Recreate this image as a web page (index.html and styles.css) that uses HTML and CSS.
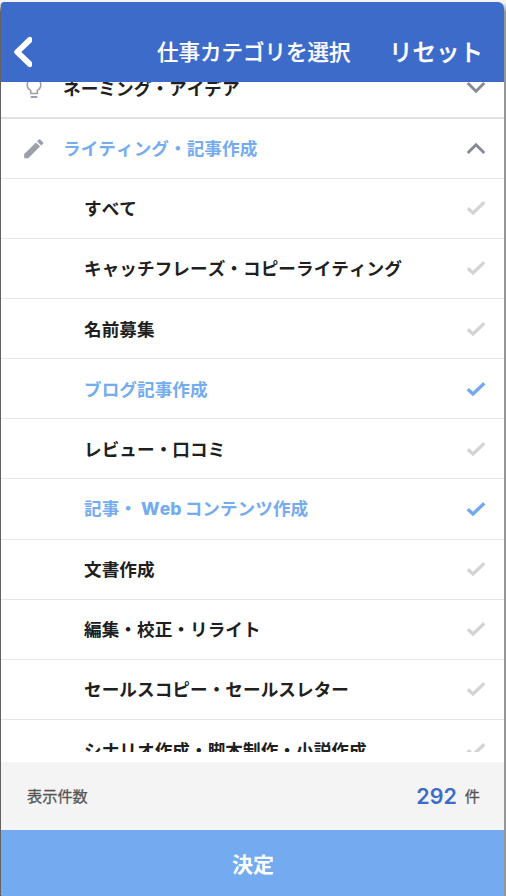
FILE: index.html
```html
<!DOCTYPE html>
<html lang="ja">
<head>
<meta charset="utf-8">
<title>仕事カテゴリを選択</title>
<link rel="stylesheet" href="styles.css">
</head>
<body>
<svg class="defs" width="0" height="0" aria-hidden="true">
  <symbol id="check" viewBox="0 0 20 16"><path d="M1.8 8.2 7 12.9 18.3 2.3" fill="none" stroke="currentColor" stroke-width="3.3"/></symbol>
  <symbol id="chevron" viewBox="0 0 20 14"><path d="M1.7 2 10 10.3 18.3 2" fill="none" stroke="currentColor" stroke-width="2.9"/></symbol>
</svg>
<div class="screen">
  <header class="header">
    <svg class="back" viewBox="0 0 20 32"><path d="M17.8 3.8 5.2 16 17.8 28.2" fill="none" stroke="currentColor" stroke-width="5.8" stroke-linecap="round" stroke-linejoin="round"/></svg>
    <h1 class="title">仕事カテゴリを選択</h1>
    <span class="reset">リセット</span>
  </header>
  <main class="viewport">
    <ul class="list">
      <li class="row category closed">
        <svg class="lead" viewBox="0 0 22 24"><path d="M7.7 17.5v-3.1C5.3 13 4.2 11.1 4.2 8.7a6.8 6.8 0 0 1 13.6 0c0 2.4-1.1 4.3-3.5 5.7v3.1z" fill="none" stroke="currentColor" stroke-width="1.6"/><path d="M7.7 21h6.6" fill="none" stroke="currentColor" stroke-width="1.9"/></svg>
        <span class="label">ネーミング・アイデア</span>
        <svg class="chevron"><use href="#chevron"/></svg>
      </li>
      <li class="row category active">
        <svg class="lead" viewBox="0 0 22 24"><path d="M1.2 18.1 13 6.4l4.1 4.1L5.2 22.2h-4z" fill="currentColor"/><path d="m14 5.3 1.8-1.8q.7-.7 1.4 0l2.8 2.8q.7.7 0 1.4l-1.8 1.8z" fill="currentColor"/></svg>
        <span class="label">ライティング・記事作成</span>
        <svg class="chevron up"><use href="#chevron"/></svg>
      </li>
      <li class="row"><span class="label">すべて</span><svg class="check"><use href="#check"/></svg></li>
      <li class="row"><span class="label">キャッチフレーズ・コピーライティング</span><svg class="check"><use href="#check"/></svg></li>
      <li class="row"><span class="label">名前募集</span><svg class="check"><use href="#check"/></svg></li>
      <li class="row active"><span class="label">ブログ記事作成</span><svg class="check"><use href="#check"/></svg></li>
      <li class="row"><span class="label">レビュー・口コミ</span><svg class="check"><use href="#check"/></svg></li>
      <li class="row active"><span class="label">記事・<span class="latin">Web</span>コンテンツ作成</span><svg class="check"><use href="#check"/></svg></li>
      <li class="row"><span class="label">文書作成</span><svg class="check"><use href="#check"/></svg></li>
      <li class="row"><span class="label">編集・校正・リライト</span><svg class="check"><use href="#check"/></svg></li>
      <li class="row"><span class="label">セールスコピー・セールスレター</span><svg class="check"><use href="#check"/></svg></li>
      <li class="row"><span class="label">シナリオ作成・脚本制作・小説作成</span><svg class="check"><use href="#check"/></svg></li>
    </ul>
  </main>
  <section class="summary">
    <span class="caption">表示件数</span>
    <span class="count">292</span>
    <span class="unit">件</span>
  </section>
  <button class="submit">決定</button>
</div>
</body>
</html>
```
FILE: styles.css
```css
* { box-sizing: border-box; }

body {
  margin: 0;
  height: 896px;
  overflow: hidden;
  padding: 2px 2px 0 1px;
  background: linear-gradient(to bottom, #f3f3f3 0 3px, transparent 12px),
    linear-gradient(to right, #626264 0 50%, #969696 50%);
  font-family: "Noto Sans CJK JP", sans-serif;
  font-kerning: none;
  color: #202020;
}

.defs { display: block; position: absolute; }

.screen {
  display: flex;
  flex-direction: column;
  height: 894px;
  overflow: hidden;
  border-radius: 3px 6px 0 3px;
  background: #fff;
}

.header {
  display: flex;
  align-items: center;
  flex: 0 0 80px;
  padding: 19px 21px 0 11px;
  background: #3c6bca;
  color: #fff;
}

.back { width: 20px; height: 32px; }

.title {
  margin: -2px 0 0 125px;
  font-size: 21.5px;
  font-weight: 500;
  line-height: 32px;
  white-space: nowrap;
  -webkit-text-stroke: 0.2px currentColor;
}

.reset {
  margin: -2px 0 0 auto;
  font-size: 23.5px;
  font-weight: 500;
  line-height: 32px;
  -webkit-text-stroke: 0.3px currentColor;
}

.viewport {
  flex: 0 0 670px;
  overflow: hidden;
}

.list {
  margin: -23.6px 0 0;
  padding: 0;
  list-style: none;
}

.row {
  display: flex;
  align-items: center;
  justify-content: space-between;
  height: 60.15px;
  padding: 0 18px 0 83px;
  border-bottom: 1px solid #e7e7e8;
}

.closed {
  padding-top: 2px;
  border-bottom: 2px solid #e1e1e2;
}

.category { padding-left: 22px; }

.label {
  font-size: 17.6px;
  font-weight: 700;
  line-height: 26px;
  letter-spacing: 0.07px;
  white-space: nowrap;
}

.active .label { color: #74acef; }

.lead {
  width: 22px;
  height: 24px;
  margin-right: 18px;
  color: #9ba1aa;
}

.category .label { flex: 1; }

.latin {
  margin: 0 3px 0 4px;
  font-family: Inter, sans-serif;
  font-weight: 800;
}

.chevron {
  width: 20px;
  height: 14px;
  color: #868b95;
}

.up { transform: scaleY(-1); }

.check {
  width: 20px;
  height: 16px;
  color: #d4d4d4;
}

.active .check { color: #70a9ef; }

.summary {
  display: flex;
  align-items: center;
  flex: 0 0 68px;
  margin-top: 10px;
  padding: 0 24px 0 26px;
  background: #f4f4f4;
  color: #555;
  font-size: 15.2px;
}

.caption, .unit {
  margin-top: -2px;
  -webkit-text-stroke: 0.3px currentColor;
}

.count {
  margin: 0 8px 0 auto;
  color: #3c6bca;
  font: 600 21.5px Inter, sans-serif;
}

.submit {
  flex: 1;
  border: 0;
  padding: 0 0 0 1px;
  background: #73aaf0;
  color: #fff;
  font: 700 21px "Noto Sans CJK JP", sans-serif;
}
```
